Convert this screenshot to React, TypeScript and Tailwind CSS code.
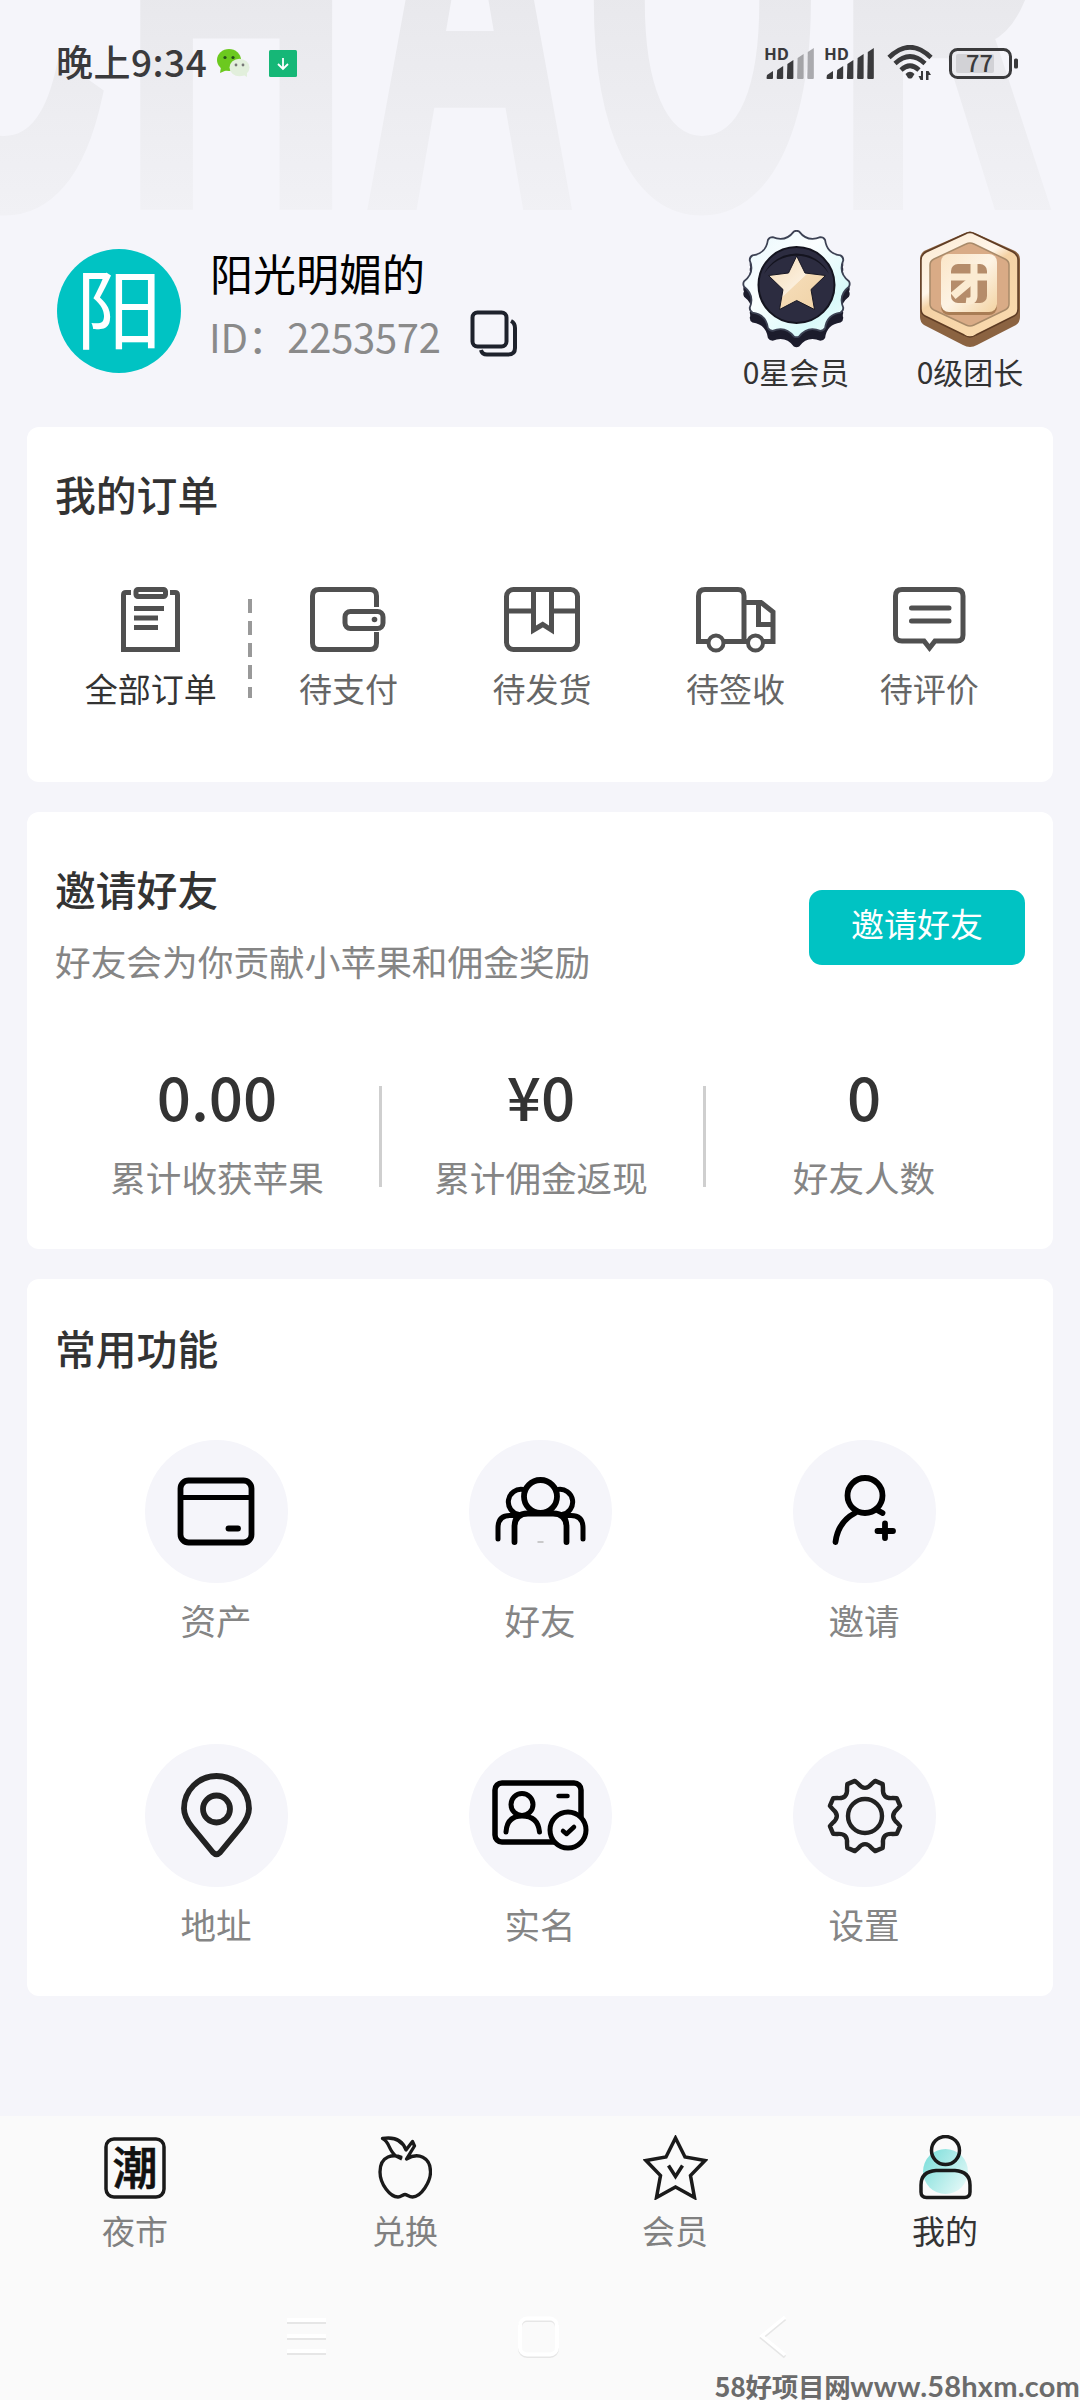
import type { ReactNode } from "react"

const BACKDROP_LETTERS = [
  { char: "C", x: -115, scale: 0.53 },
  { char: "H", x: 123, scale: 0.54 },
  { char: "A", x: 365, scale: 0.5 },
  { char: "O", x: 585, scale: 0.52 },
  { char: "R", x: 837, scale: 0.51 },
]

function Backdrop() {
  return (
    <svg className="absolute left-0 top-0" width="1080" height="240" viewBox="0 0 1080 240">
      <defs>
        <linearGradient id="fade" gradientUnits="userSpaceOnUse" x1="0" y1="-400" x2="0" y2="12">
          <stop offset="0.45" stopColor="#e8e8ec" />
          <stop offset="1" stopColor="#f1f1f5" />
        </linearGradient>
      </defs>
      {BACKDROP_LETTERS.map((l) => (
        <text
          key={l.char}
          transform={`translate(${l.x} 203) scale(${l.scale} 1)`}
          className="font-['Liberation_Sans'] text-[581px] font-bold"
          fill="url(#fade)"
          stroke="url(#fade)"
          strokeWidth="11"
          vectorEffect="non-scaling-stroke"
        >
          {l.char}
        </text>
      ))}
    </svg>
  )
}

function Signal({ level }: { level: number }) {
  return (
    <svg width="50" height="34" viewBox="0 0 50 34" fill="#3a3a3c">
      <text x="-1" y="13.5" fontSize="16" fontWeight="700" textLength="25" lengthAdjust="spacingAndGlyphs">
        HD
      </text>
      {[8, 13, 19, 25, 31].map((h, i) => (
        <path
          key={h}
          opacity={i < level ? 1 : 0.4}
          d={`M${2 + i * 10.2} ${33 - h + 4}l6 -4v${h - 1}q0 1 -1 1h-4.500q-1 0 -1 -1z`}
        />
      ))}
    </svg>
  )
}

function StatusBar() {
  return (
    <div className="relative flex h-[126px] items-center pl-[56px] pr-[61px] text-[#3a3a3c]">
      <span className="mt-[-4px] w-[161px] whitespace-nowrap text-[37px] font-medium tracking-[0.5px] leading-[50px]">晚上9:34</span>
      <svg width="33" height="29" viewBox="0 0 33 29">
        <ellipse cx="12" cy="11" rx="12" ry="11" fill="#6cc91f" />
        <path d="M4 18l-1 6 7-3z" fill="#6cc91f" />
        <circle cx="8" cy="8.500" r="1.600" fill="#26501a" />
        <circle cx="16" cy="8.500" r="1.600" fill="#26501a" />
        <ellipse cx="22.500" cy="18.500" rx="10" ry="8.800" fill="#e2efdc" />
        <path d="M25 25l5 3 0-6z" fill="#e2efdc" />
        <circle cx="19" cy="16" r="1.400" fill="#777" />
        <circle cx="26" cy="16" r="1.400" fill="#777" />
      </svg>
      <svg className="ml-[19px]" width="28" height="27" viewBox="0 0 28 27">
        <rect width="28" height="27" rx="1.500" fill="#16b777" />
        <path d="M14 8v11M9 14l5 5 5-5" fill="none" stroke="#fff" strokeWidth="1.800" />
      </svg>
      <div className="ml-auto flex items-center">
        <Signal level={3} />
        <div className="ml-[10px]">
          <Signal level={5} />
        </div>
        <svg className="ml-[12px]" width="48" height="36" viewBox="0 0 48 36">
          <g fill="none" stroke="#3a3a3c" strokeWidth="4.600">
            <path d="M2 12.500Q23 -8 44 12.500" />
            <path d="M8 18.500Q23 4.500 38 18.500" />
            <path d="M14 25Q23 16.500 32 25" />
          </g>
          <path d="M18.500 29q4.500-4.500 9 0l-2.500 4q-2 1-4 0z" fill="#3a3a3c" />
          <path d="M36 26v9h-2.500l-2-4h2.500v-5zM39 35v-9h2.500l2.500 4h-2.500v5z" fill="#3a3a3c" />
        </svg>
        <svg className="ml-[14px]" width="70" height="31" viewBox="0 0 70 31">
          <rect x="1.500" y="1.500" width="60" height="28" rx="7" fill="none" stroke="#3a3a3c" strokeWidth="3" />
          <rect x="7" y="6" width="38" height="19" rx="2" fill="#d2d2d6" />
          <rect x="65" y="10.500" width="4" height="10" rx="1.500" fill="#3a3a3c" />
          <text x="30.500" y="24" fontSize="23.500" fontWeight="500" textAnchor="middle" fill="#3a3a3c">
            77
          </text>
        </svg>
      </div>
    </div>
  )
}

// scalloped rim of the member badge
const rim = (() => {
  let d = ""
  for (let i = 0; i < 12; i++) {
    const at = (deg: number, r: number) => {
      const a = ((deg - 90) * Math.PI) / 180
      return `${(54.5 + r * Math.cos(a)).toFixed(1)} ${(54 + r * Math.sin(a)).toFixed(1)}`
    }
    const s = i * 30
    d += `${i ? "L" : "M"}${at(s - 3, 52.5)}Q${at(s, 54)} ${at(s + 3, 52.5)}Q${at(s + 15, 43)} ${at(s + 27, 52.5)}`
  }
  return d + "Z"
})()

function StarBadge() {
  return (
    <svg width="109" height="118" viewBox="0 0 109 118">
      <defs>
        <linearGradient id="rim" x1="0" y1="0" x2="1" y2="1">
          <stop offset="0" stopColor="#e8f8fc" />
          <stop offset="0.4" stopColor="#fbfeff" />
          <stop offset="0.75" stopColor="#d9fafa" />
          <stop offset="1" stopColor="#f4ffff" />
        </linearGradient>
        <linearGradient id="gold" x1="0" y1="0" x2="1" y2="1">
          <stop offset="0.1" stopColor="#f6dfbd" />
          <stop offset="0.5" stopColor="#fbeedb" />
          <stop offset="0.51" stopColor="#f4dab4" />
          <stop offset="1" stopColor="#f0d2a6" />
        </linearGradient>
      </defs>
      <path d={rim} transform="translate(0 10)" fill="#1c1c2c" />
      <path d={rim} transform="translate(0 5)" fill="#1c1c2c" />
      <path d={rim} fill="url(#rim)" stroke="#3d4254" strokeWidth="1.800" />
      <circle cx="54.500" cy="55" r="38" fill="#2c2c40" stroke="#14141f" strokeWidth="2" />
      <path d="M22 44A36 36 0 0 1 87 44A38 38 0 0 0 22 44z" fill="#14141f" />
      <path
        d="M54.700 26L63 43 83.500 45.500 69 59.500 72.500 79.500 54.700 70.500 37.500 79.500 41 59.500 26.500 45.500 46.500 43z"
        fill="url(#gold)"
        stroke="#171724"
        strokeWidth="1"
      />
    </svg>
  )
}

function LeaderBadge() {
  return (
    <svg width="102" height="118" viewBox="0 0 102 118">
      <defs>
        <linearGradient id="bronze" x1="0" y1="0" x2="0.600" y2="1">
          <stop offset="0" stopColor="#fbe8cf" />
          <stop offset="0.45" stopColor="#fff6ea" />
          <stop offset="0.55" stopColor="#f5d3a6" />
          <stop offset="1" stopColor="#f9d9ad" />
        </linearGradient>
        <linearGradient id="plate" x1="0" y1="0" x2="1" y2="1">
          <stop offset="0" stopColor="#fbe6c8" />
          <stop offset="0.5" stopColor="#fdf3e4" />
          <stop offset="1" stopColor="#f3d3a2" />
        </linearGradient>
      </defs>
      <path d="M46 3Q51 0 56 3L96 21Q101 24 101 29V87Q101 92 97 95L58 115Q51 119 44 115L5 95Q1 92 1 87V29Q1 24 5 21z" fill="#8b6341" />
      <path d="M46 4Q51 1 56 4L94 22Q99 25 99 30V79Q99 84 95 86L57 105Q51 109 45 105L6 86Q2 84 2 79V30Q2 25 7 22z" fill="url(#bronze)" stroke="#5f3c24" strokeWidth="1.500" />
      <path d="M47 14Q51 12 55 14L86 29Q90 31 90 35V74Q90 78 86 80L55 95Q51 97 47 95L15 80Q11 78 11 74V35Q11 31 15 29z" fill="#d9ab86" stroke="#a88a69" strokeWidth="1.500" />
      <rect x="22" y="27" width="56" height="58" rx="8" fill="#a97d55" />
      <rect x="22" y="24" width="56" height="58" rx="8" fill="url(#plate)" />
      {/* engraved seal with the strokes left raised */}
      <rect x="32" y="34" width="36" height="39" rx="7" fill="#b58c6a" />
      <g fill="none" stroke="#fbebd2" strokeWidth="7">
        <path d="M32 47H68" />
        <path d="M55 34V66Q55 72 47 71" />
        <path d="M53 50L34 66" strokeWidth="8" />
      </g>
    </svg>
  )
}

function Profile() {
  return (
    <div className="relative flex h-[301px] items-start pl-[57px] pr-[23px] pt-[104px]">
      <div className="mt-[19px] flex h-[124px] w-[124px] items-center justify-center rounded-full bg-[#00c3c3] text-[87px] leading-none text-white">
        <span className="mt-[-12px]">阳</span>
      </div>
      <div className="ml-[29px] mt-[17px]">
        <div className="h-[50px] text-[43px] leading-[50px] text-black">阳光明媚的</div>
        <div className="mt-[14px] flex">
          <span className="ml-[-1px] w-[261px] whitespace-nowrap text-[40px] leading-[50px] tracking-[-0.3px] text-[#8a8a8a]">ID：2253572</span>
          <svg className="mt-[-1px]" width="48" height="48" viewBox="0 0 48 48" fill="none" stroke="#1e222c" strokeWidth="4">
            <rect x="2.500" y="2.500" width="34" height="34" rx="5" />
            <path d="M41 11Q45 13 45 18V38Q45 44.500 38 44.500H17Q12 44.500 11 40" />
          </svg>
        </div>
      </div>
      <div className="ml-auto flex text-[30px] leading-[40px] text-[#333]">
        <div className="flex w-[174px] flex-col items-center gap-[3px]">
          <StarBadge />
          <span>0星会员</span>
        </div>
        <div className="flex w-[174px] flex-col items-center gap-[3px]">
          <LeaderBadge />
          <span>0级团长</span>
        </div>
      </div>
    </div>
  )
}

function OrderIcon({ width, children }: { width: number; children: ReactNode }) {
  return (
    <svg width={width} height="66" viewBox={`0 0 ${width} 66`} fill="none" stroke="#505050" strokeWidth="5">
      {children}
    </svg>
  )
}

const ORDERS = [
  {
    label: "待支付",
    icon: (
      <OrderIcon width={76}>
        <path d="M66.500 20V9Q66.500 2.500 60 2.500H9Q2.500 2.500 2.500 9V56Q2.500 62.500 9 62.500H60Q66.500 62.500 66.500 56V45" />
        <rect x="35" y="24.500" width="38" height="17" rx="5.500" />
        <circle cx="64.500" cy="32.500" r="2.800" fill="#505050" stroke="none" />
      </OrderIcon>
    ),
  },
  {
    label: "待发货",
    icon: (
      <OrderIcon width={76}>
        <rect x="2.500" y="2.500" width="71" height="60" rx="7" />
        <path d="M3 24H29M48 24H73M29.500 3V43L38.700 37.500 47.500 43V3" />
      </OrderIcon>
    ),
  },
  {
    label: "待签收",
    icon: (
      <OrderIcon width={80}>
        <path d="M12 54.500H2.500V9Q2.500 2.500 9 2.500H42Q48 2.500 48 9V54.500M28 54.500H51M49 15.500H65L77 25V54.500H67M62.500 16V37.500H76" />
        <circle cx="20" cy="56" r="7.500" strokeWidth="4" />
        <circle cx="59.500" cy="56" r="7.500" strokeWidth="4" />
      </OrderIcon>
    ),
  },
  {
    label: "待评价",
    icon: (
      <OrderIcon width={73}>
        <path d="M9 2.500H63Q70 2.500 70 9V48Q70 54 64 54H42L36.500 61 31 54H9Q2.500 54 2.500 48V9Q2.500 2.500 9 2.500z" />
        <path d="M18.500 21H56M18.500 34H56" strokeLinecap="round" />
      </OrderIcon>
    ),
  },
]

function Orders() {
  return (
    <section className="h-[355px] rounded-[12px] bg-white px-[27px] pt-[42px]">
      <h2 className="pl-px text-[40.800px] font-medium leading-[50px] text-[#333]">我的订单</h2>
      <div className="mt-[68px] flex text-[33px] leading-[40px] text-[#666]">
        <div className="flex flex-1 flex-col items-center gap-[15px] text-[#333]">
          <OrderIcon width={60}>
            <path d="M10 5.500H5Q2.500 5.500 2.500 8V62.500H56.500V8Q56.500 5.500 54 5.500H49" />
            <rect x="15" y="2.500" width="29.500" height="7" rx="2" />
            <path d="M13 21.500H43M13 31H37M13 40.500H37" />
          </OrderIcon>
          <span>全部订单</span>
        </div>
        <svg className="mt-[12px]" width="4" height="99" viewBox="0 0 4 99">
          <path d="M2 0V99" stroke="#999" strokeWidth="4" strokeDasharray="14 8" />
        </svg>
        {ORDERS.map((o) => (
          <div key={o.label} className="flex flex-1 flex-col items-center gap-[15px]">
            {o.icon}
            <span>{o.label}</span>
          </div>
        ))}
      </div>
    </section>
  )
}

const STATS = [
  { value: "0.00", label: "累计收获苹果" },
  { value: "¥0", label: "累计佣金返现" },
  { value: "0", label: "好友人数" },
]

function Invite() {
  return (
    <section className="mt-[30px] h-[437px] rounded-[12px] bg-white px-[27px] pt-[52px]">
      <div className="flex justify-between pl-px pr-px">
        <div>
          <h2 className="text-[40.800px] font-medium leading-[50px] text-[#333]">邀请好友</h2>
          <p className="mt-[22px] text-[35.700px] leading-[50px] text-[#858585]">好友会为你贡献小苹果和佣金奖励</p>
        </div>
        <button className="mt-[26px] h-[75px] w-[216px] rounded-[13px] bg-[#00c3c3] pb-[10px] text-[33px] leading-[40px] text-white">
          邀请好友
        </button>
      </div>
      <div className="mt-[79px] flex">
        {STATS.map((s, i) => (
          <div key={s.label} className="flex w-[324px]">
            <div className="flex flex-1 flex-col items-center">
              <span className="text-[60px] font-medium leading-[60px] text-[#333]">{s.value}</span>
              <span className="mt-[27px] text-[35.600px] leading-[50px] text-[#858585]">{s.label}</span>
            </div>
            {i < 2 && <div className="ml-[-3px] mr-[-2px] mt-[21px] h-[101px] w-[3px] translate-x-[2px] bg-[#cfcfcf]" />}
          </div>
        ))}
      </div>
    </section>
  )
}

const gear = (() => {
  const at = (deg: number, r: number) => {
    const a = ((deg - 90) * Math.PI) / 180
    return `${(72 + r * Math.cos(a)).toFixed(1)} ${(72 + r * Math.sin(a)).toFixed(1)}`
  }
  let d = ""
  for (let k = 0; k < 8; k++) {
    const s = k * 45
    d += `${k ? "L" : "M"}${at(s + 16, 36.5)}L${at(s + 29, 36.5)}L${at(s + 33, 33)}Q${at(s + 45, 24)} ${at(s + 57, 33)}`
  }
  return d + "Z"
})()

const FEATURES = [
  {
    label: "资产",
    icon: (
      <>
        <rect x="35.500" y="40.500" width="71" height="62" rx="8" />
        <path d="M36 57.500H106" strokeWidth="5" />
        <path d="M83.500 88.500H93" />
      </>
    ),
  },
  {
    label: "好友",
    icon: (
      <>
        <circle cx="71.500" cy="56.500" r="16.500" />
        <path d="M54 49.500A12.500 12.500 0 1 0 50 74.500M89 49.500A12.500 12.500 0 1 1 93 74.500" strokeWidth="5" />
        <path d="M45.500 102V87Q45.500 73.500 59 73.500H84Q97.500 73.500 97.500 87V102" />
        <path d="M29 99V88Q29 75.500 41 75.500H49M114 99V88Q114 75.500 102 75.500H94" strokeWidth="5" />
        <path d="M69 102H74" stroke="#bbb" strokeWidth="1.500" />
      </>
    ),
  },
  {
    label: "邀请",
    icon: (
      <>
        <circle cx="72" cy="55.500" r="17.500" />
        <path d="M42.500 102Q45 82 62 73M85 70.500L89.500 73M92 83.500V98M84.500 91H100" />
      </>
    ),
  },
  {
    label: "地址",
    icon: (
      <g stroke="#222">
        <circle cx="71.500" cy="65" r="13.500" />
        <path d="M68 108.500L47 83Q39 73 39 64.500A32.500 32.500 0 0 1 104 64.500Q104 73 96 83L75 108.500Q71.500 112 68 108.500z" />
      </g>
    ),
  },
  {
    label: "实名",
    icon: (
      <>
        <rect x="26" y="39" width="86" height="59" rx="7" strokeWidth="5.500" />
        <circle cx="53" cy="60.500" r="11" strokeWidth="5" />
        <path d="M37 88Q38 72 53 72Q69 72 70.500 88" strokeWidth="5" />
        <path d="M89.500 52H98.500" strokeWidth="4.500" />
        <circle cx="99" cy="86" r="18" fill="#f5f5fa" strokeWidth="5" />
        <path d="M94 87L97.500 90 105 83" strokeWidth="4.500" />
      </>
    ),
  },
  {
    label: "设置",
    icon: (
      <g stroke="#222" strokeWidth="4.400">
        <circle cx="72" cy="72" r="17" />
        <path d={gear} />
      </g>
    ),
  },
]

function Features() {
  return (
    <section className="mt-[30px] h-[717px] rounded-[12px] bg-white px-[27px] pt-[44px]">
      <h2 className="pl-px text-[40.800px] font-medium leading-[50px] text-[#333]">常用功能</h2>
      <div className="mt-[67px] grid grid-cols-3 gap-y-[99px]">
        {FEATURES.map((f) => (
          <div key={f.label} className="flex flex-col items-center">
            <div className="h-[143px] w-[143px] rounded-full bg-[#f5f5fa]">
              <svg
                width="143"
                height="143"
                viewBox="0 0 143 143"
                fill="none"
                stroke="#000"
                strokeWidth="5.800"
                strokeLinecap="round"
                strokeLinejoin="round"
              >
                {f.icon}
              </svg>
            </div>
            <span className="mt-[12px] text-[35.600px] leading-[50px] text-[#858585]">{f.label}</span>
          </div>
        ))}
      </div>
    </section>
  )
}

const TABS = [
  {
    label: "夜市",
    icon: (
      <svg width="62" height="62" viewBox="0 0 62 62">
        <rect x="2" y="2" width="58" height="58" rx="8" fill="none" stroke="#1a1a1a" strokeWidth="3.500" />
        <text x="31" y="47.500" fontSize="45" fontWeight="500" textAnchor="middle" fill="#111" stroke="#111" strokeWidth="0.700">
          潮
        </text>
      </svg>
    ),
  },
  {
    label: "兑换",
    icon: (
      <svg width="54" height="63" viewBox="0 0 54 63" fill="none" stroke="#1a1a1a" strokeWidth="3.300" strokeLinejoin="round">
        <path d="M24 21.500C16 18 2 19 2 36C2 48 12 61 20 61C23 61 25 58.500 27 58.500C29 58.500 31 61 34.500 61C43 61 52.500 46 52.500 36C52.500 21 40 16 28.500 23L36.500 10 34.500 5.500 28 14C24 3 14 1 4.500 2.500C12 6 10 14 18 20L24 23" />
      </svg>
    ),
  },
  {
    label: "会员",
    icon: (
      <svg width="65" height="65" viewBox="0 0 65 65" fill="none" stroke="#1a1a1a" strokeWidth="3.500">
        <path d="M32.500 3L42 22 62 25.500 47.500 40.500 51.500 62.500 32.500 52 13.500 62.500 17.500 40.500 3 25.500 23 22z" />
        <path d="M25.500 30.500L32.500 41.500 39.500 30.500" />
      </svg>
    ),
  },
  {
    label: "我的",
    icon: (
      <svg width="53" height="65" viewBox="0 0 53 65">
        <defs>
          <linearGradient id="glow" x1="0" y1="0.200" x2="1" y2="0.900">
            <stop offset="0" stopColor="#7fdfdb" />
            <stop offset="1" stopColor="#eafaf9" />
          </linearGradient>
        </defs>
        <circle cx="26.500" cy="36.500" r="22.500" fill="url(#glow)" />
        <g fill="none" stroke="#1a1a1a" strokeWidth="3.500">
          <circle cx="26.500" cy="15.500" r="14" />
          <path d="M17 35.500H36Q51 36.500 51 50V57Q51 62.500 45.500 62.500H7.500Q2 62.500 2 57V50Q2 36.500 17 35.500z" />
        </g>
      </svg>
    ),
  },
]

function TabBar() {
  return (
    <nav className="relative mt-[120px] h-[284px] bg-[#fafafa]">
      <div className="flex pt-[19px]">
        {TABS.map((t) => (
          <div key={t.label} className="flex flex-1 flex-col items-center">
            <div className="flex h-[65px] items-center">{t.icon}</div>
            <span className={`mt-[10px] text-[33px] leading-[40px] ${t.label === "我的" ? "text-[#333]" : "text-[#808080]"}`}>
              {t.label}
            </span>
          </div>
        ))}
      </div>
      <div className="mt-[65px] flex pl-[286px]">
        <svg width="42" height="44" viewBox="0 0 42 44" strokeWidth="4">
          <path d="M1 7H40M1 23H40M1 38H40" stroke="#e6e6e6" />
          <path d="M1 5H40M1 21H40M1 36H40" stroke="#fff" />
        </svg>
        <svg className="ml-[189px]" width="42" height="44" viewBox="0 0 42 44" fill="none" strokeWidth="4">
          <rect x="3" y="5" width="37" height="36" rx="7" stroke="#e6e6e6" />
          <rect x="3" y="3.500" width="37" height="36" rx="7" stroke="#fff" />
        </svg>
        <svg className="ml-[200px]" width="28" height="44" viewBox="0 0 28 44" fill="none" strokeWidth="3.500">
          <path d="M26 4L3 23 26 42" stroke="#e6e6e6" />
          <path d="M26 2L3 21 26 40" stroke="#fff" />
        </svg>
      </div>
      <div className="absolute bottom-[-2px] right-0 flex h-[32px] items-center whitespace-nowrap font-bold text-[#6b6b6b]">
        <span className="text-[26.500px] leading-[32px] tracking-[-0.300px]">58好项目网</span>
        <span className="font-['Lato','Noto_Sans_CJK_SC',sans-serif] text-[29px] leading-[32px] tracking-[0.200px]">www.58hxm.com</span>
      </div>
    </nav>
  )
}

export default function App() {
  return (
    <div className="relative h-[2400px] w-[1080px] overflow-hidden bg-[#f5f5fa] font-['Noto_Sans_CJK_SC',sans-serif]">
      <Backdrop />
      <StatusBar />
      <Profile />
      <main className="relative px-[27px]">
        <Orders />
        <Invite />
        <Features />
      </main>
      <TabBar />
    </div>
  )
}
